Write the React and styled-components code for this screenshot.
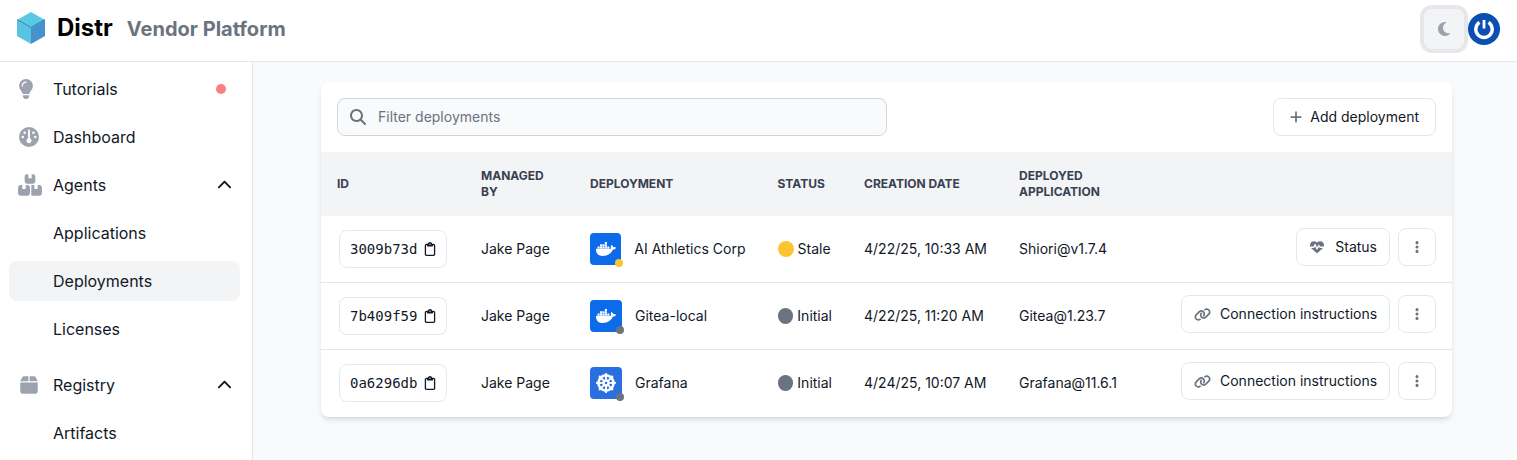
import React from 'react';
import styled, { createGlobalStyle } from 'styled-components';
import {
  FaLightbulb, FaGauge, FaBoxesStacked, FaBox, FaChevronUp, FaMoon, FaMagnifyingGlass, FaPlus,
  FaRegClipboard, FaDocker, FaDharmachakra, FaHeartPulse, FaLink, FaEllipsisVertical,
} from 'react-icons/fa6';

const GlobalStyle = createGlobalStyle`
  html, body { margin: 0; padding: 0; height: 100%; overflow: hidden; }
  body { font-family: Inter, "Liberation Sans", sans-serif; color: #111827; background: #f9fafb; }
  * { box-sizing: border-box; }
`;

const Page = styled.div`
  height: 460px;
  display: flex;
  flex-direction: column;
  overflow: hidden;
`;

const Header = styled.header`
  height: 62px;
  flex: none;
  display: flex;
  align-items: center;
  justify-content: space-between;
  padding: 0 17px;
  background: #fff;
  border-bottom: 1px solid #e5e7eb;
`;

const Brand = styled.div`
  display: flex;
  align-items: baseline;
  padding-bottom: 3px;
  svg { align-self: center; margin-bottom: 2px; }
`;

const BrandName = styled.span`
  margin: 1px 0 0 12px;
  font-size: 24px;
  font-weight: 700;
  color: #000;
`;

const BrandSub = styled.span`
  margin-left: 14px;
  font-size: 20px;
  font-weight: 700;
  color: #6b7280;
`;

const HeaderRight = styled.div`
  display: flex;
  align-items: center;
  padding-bottom: 3px;
`;

const ThemeButton = styled.button`
  width: 48px;
  height: 48px;
  border: 4px solid #e5e7eb;
  border-radius: 12px;
  background: #f3f4f6;
  color: #9ca3af;
  font-size: 16px;
  display: flex;
  align-items: center;
  justify-content: center;
  padding: 0;
`;

const Body = styled.div`
  flex: 1;
  display: flex;
  min-height: 0;
`;

const Sidebar = styled.nav`
  width: 253px;
  flex: none;
  padding: 7px 12px 0 9px;
  background: #fff;
  border-right: 1px solid #e5e7eb;
`;

const NavItem = styled.div`
  height: 40px;
  margin-bottom: ${p => (p.$gap ? '16px' : '8px')};
  display: flex;
  align-items: center;
  padding-left: ${p => (p.$sub ? '44px' : '10px')};
  padding-right: 8px;
  border-radius: 8px;
  font-size: 16px;
  color: #111827;
  background: ${p => (p.$active ? '#f3f4f6' : 'transparent')};
`;

const NavIcon = styled.span`
  width: 34px;
  flex: none;
  display: flex;
  color: #9ca3af;
  svg {
    height: ${p => p.$size || 20}px;
    width: ${p => p.$size || 20}px;
    margin-left: ${p => p.$inset || 0}px;
    flex: none;
  }
`;

const NavLabel = styled.span`
  flex: 1;
`;

const Chevron = styled(FaChevronUp)`
  height: 15px;
  width: 15px;
  color: #111827;
`;

const RedDot = styled.span`
  width: 10px;
  height: 10px;
  margin-right: 6px;
  border-radius: 50%;
  background: #f98080;
`;

const Main = styled.main`
  flex: 1;
  padding: 20px 65px 0 68px;
`;

const Card = styled.section`
  background: #fff;
  border-radius: 8px;
  box-shadow: 0 4px 6px -1px rgba(0, 0, 0, 0.1), 0 2px 4px -2px rgba(0, 0, 0, 0.1);
  overflow: hidden;
`;

const Toolbar = styled.div`
  height: 70px;
  padding: 16px;
  display: flex;
  justify-content: space-between;
`;

const Search = styled.div`
  width: 550px;
  height: 38px;
  display: flex;
  align-items: center;
  padding-left: 12px;
  border: 1px solid #d1d5db;
  border-radius: 8px;
  background: #f9fafb;
  color: #6b7280;
  font-size: 14px;
  line-height: 20px;
`;

const SearchIcon = styled(FaMagnifyingGlass)`
  font-size: 16px;
  margin-right: 12px;
  color: #6b7280;
`;

const Button = styled.button`
  height: 38px;
  display: flex;
  align-items: center;
  justify-content: center;
  gap: ${p => p.$gap || 10}px;
  padding: ${p => (p.$square ? '0' : `0 ${p.$right || 12}px 0 ${p.$left || 12}px`)};
  width: ${p => (p.$square ? '38px' : 'auto')};
  border: 1px solid #e5e7eb;
  border-radius: 8px;
  background: #fff;
  color: #111827;
  font-family: inherit;
  font-size: 14px;
  line-height: 20px;
  svg { color: #6b7280; height: ${p => p.$icon || 14}px; width: ${p => p.$icon || 14}px; flex: none; }
`;

const Table = styled.table`
  width: 100%;
  border-collapse: separate;
  border-spacing: 0;
  table-layout: fixed;
  font-size: 14px;
  line-height: 20px;
`;

const Th = styled.th`
  width: ${p => (p.$w ? p.$w + 'px' : 'auto')};
  height: 64px;
  padding: 0 16px;
  background: #f3f4f6;
  text-align: left;
  font-size: 12px;
  line-height: 16px;
  font-weight: 700;
  color: #374151;
  text-transform: uppercase;
`;

const Td = styled.td`
  height: 67px;
  padding: 0 16px;
  border-bottom: 1px solid #e5e7eb;
  color: #111827;
  white-space: nowrap;
`;

const Tr = styled.tr`
  &:last-child ${Td} { border-bottom-color: transparent; }
`;

const IdButton = styled.button`
  width: 108px;
  height: 38px;
  margin-left: 2px;
  display: flex;
  align-items: center;
  gap: 6px;
  padding: 0 10px;
  border: 1px solid #e5e7eb;
  border-radius: 8px;
  background: #fff;
  color: #111827;
  font-family: "DejaVu Sans Mono", monospace;
  font-size: 14px;
  svg { height: 14px; width: 14px; flex: none; }
`;

const Deployment = styled.div`
  display: flex;
  align-items: center;
  gap: 13px;
`;

const TypeIcon = styled.div`
  position: relative;
  width: 32px;
  height: 32px;
  display: flex;
  align-items: center;
  justify-content: center;
  border-radius: 4px;
  background: ${p => p.$bg};
  color: #fff;
  font-size: 20px;
`;

const Badge = styled.span`
  position: absolute;
  right: -2px;
  bottom: -2px;
  width: 8px;
  height: 8px;
  border-radius: 50%;
  background: ${p => p.$color};
`;

const Status = styled.div`
  display: flex;
  align-items: center;
  gap: 4px;
`;

const StatusDot = styled.span`
  width: 16px;
  height: 16px;
  border-radius: 50%;
  background: ${p => p.$color};
`;

const Actions = styled.div`
  display: flex;
  justify-content: flex-end;
  gap: 8px;
  padding-bottom: 4px;
`;

const Logo = () => (
  <svg width="28" height="32" viewBox="0 0 28 32">
    <polygon points="14,0 28,8 14,16 0,8" fill="#5bc8e4" />
    <polygon points="0,8 14,16 14,32 0,24" fill="#5ac2e2" />
    <polygon points="28,8 14,16 14,32 28,24" fill="#4692cf" />
    <polyline points="0,7.5 14,15.5 28,7.5" fill="none" stroke="#2b7fb0" strokeWidth="1" />
  </svg>
);

const Avatar = () => (
  <svg width="32" height="32" viewBox="0 0 32 32">
    <circle cx="16" cy="16" r="16" fill="#0b4fb3" />
    <path d="M11.5 9.4 A8.2 8.2 0 1 0 20.5 9.4" fill="none" stroke="#fff" strokeWidth="3.4" />
    <rect x="14.6" y="7" width="2.8" height="8.5" fill="#fff" />
  </svg>
);

const STALE = '#fcc52f';
const INITIAL = '#6b7280';

const ROWS = [
  { id: '3009b73d', name: 'AI Athletics Corp', type: 'docker', status: 'Stale', color: STALE, date: '4/22/25, 10:33 AM', app: 'Shiori@v1.7.4' },
  { id: '7b409f59', name: 'Gitea-local', type: 'docker', status: 'Initial', color: INITIAL, date: '4/22/25, 11:20 AM', app: 'Gitea@1.23.7' },
  { id: '0a6296db', name: 'Grafana', type: 'kubernetes', status: 'Initial', color: INITIAL, date: '4/24/25, 10:07 AM', app: 'Grafana@11.6.1' },
];

const Row = ({ row }) => (
  <Tr>
    <Td>
      <IdButton>{row.id}<FaRegClipboard /></IdButton>
    </Td>
    <Td>Jake Page</Td>
    <Td>
      <Deployment>
        {row.type === 'docker' ? (
          <TypeIcon $bg="#0b6be8"><FaDocker /><Badge $color={row.color} /></TypeIcon>
        ) : (
          <TypeIcon $bg="#2a6fe0"><FaDharmachakra /><Badge $color={row.color} /></TypeIcon>
        )}
        {row.name}
      </Deployment>
    </Td>
    <Td>
      <Status><StatusDot $color={row.color} />{row.status}</Status>
    </Td>
    <Td>{row.date}</Td>
    <Td>{row.app}</Td>
    <Td>
      <Actions>
        {row.status === 'Stale' ? (
          <Button $left={13} $gap={11}><FaHeartPulse />Status</Button>
        ) : (
          <Button $gap={9} $icon={17}><FaLink />Connection instructions</Button>
        )}
        <Button $square><FaEllipsisVertical /></Button>
      </Actions>
    </Td>
  </Tr>
);

export default function App() {
  return (
    <Page>
      <GlobalStyle />
      <Header>
        <Brand>
          <Logo />
          <BrandName>Distr</BrandName>
          <BrandSub>Vendor Platform</BrandSub>
        </Brand>
        <HeaderRight>
          <ThemeButton><FaMoon /></ThemeButton>
          <Avatar />
        </HeaderRight>
      </Header>
      <Body>
        <Sidebar>
          <NavItem><NavIcon $inset={-3}><FaLightbulb /></NavIcon><NavLabel>Tutorials</NavLabel><RedDot /></NavItem>
          <NavItem><NavIcon><FaGauge /></NavIcon><NavLabel>Dashboard</NavLabel></NavItem>
          <NavItem><NavIcon $size={24} $inset={-1}><FaBoxesStacked /></NavIcon><NavLabel>Agents</NavLabel><Chevron /></NavItem>
          <NavItem $sub>Applications</NavItem>
          <NavItem $sub $active>Deployments</NavItem>
          <NavItem $sub $gap>Licenses</NavItem>
          <NavItem><NavIcon><FaBox /></NavIcon><NavLabel>Registry</NavLabel><Chevron /></NavItem>
          <NavItem $sub>Artifacts</NavItem>
        </Sidebar>
        <Main>
          <Card>
            <Toolbar>
              <Search><SearchIcon />Filter deployments</Search>
              <Button $left={15} $right={16} $gap={7}><FaPlus />Add deployment</Button>
            </Toolbar>
            <Table>
              <thead>
                <tr>
                  <Th $w={144}>ID</Th>
                  <Th $w={109}>Managed by</Th>
                  <Th $w={187.5}>Deployment</Th>
                  <Th $w={86.5}>Status</Th>
                  <Th $w={155}>Creation date</Th>
                  <Th $w={162}>Deployed application</Th>
                  <Th />
                </tr>
              </thead>
              <tbody>
                {ROWS.map(row => <Row key={row.id} row={row} />)}
              </tbody>
            </Table>
          </Card>
        </Main>
      </Body>
    </Page>
  );
}
